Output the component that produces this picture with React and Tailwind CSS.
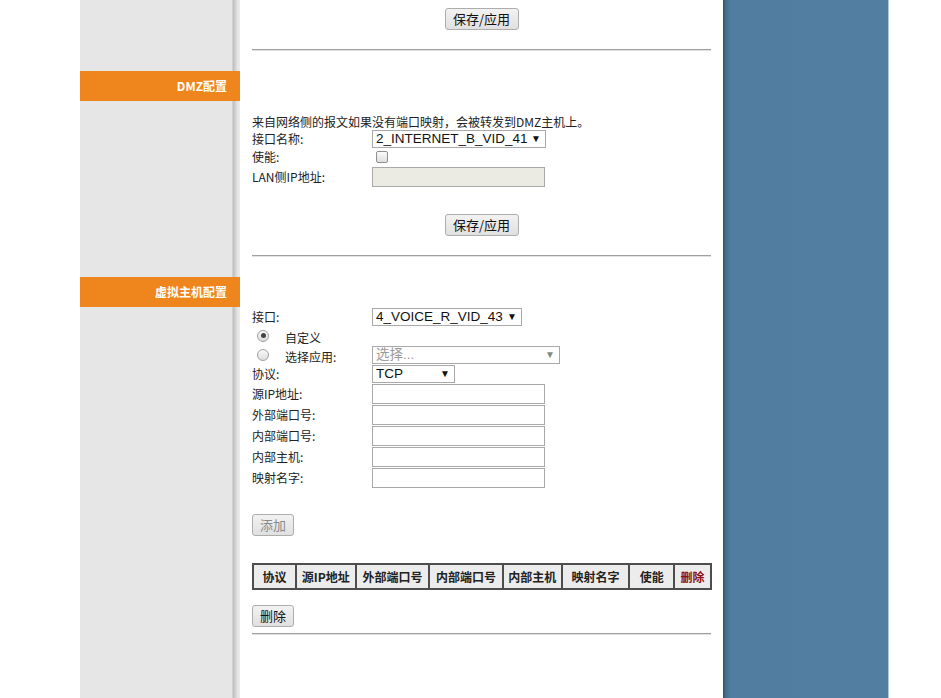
import React from "react";

const cjk = "font-['Noto_Sans_CJK_SC',sans-serif]";
const arial = "font-['Liberation_Sans','Noto_Sans_CJK_SC',sans-serif]";

function Btn({ children, w, disabled }) {
  return (
    <div
      className={`h-[22px] flex items-center justify-center border border-[#adadad] rounded-[3px] bg-[linear-gradient(#f2f2f2,#e0e0e0)] text-[13px] ${cjk} ${disabled ? "text-[#8a8a8a]" : "text-[#111]"}`}
      style={{ width: w }}
    >
      {children}
    </div>
  );
}

function Hr() {
  return <div className="h-[2px] border-t border-[#a0a0a0] border-b border-b-[#e2e2e2]" />;
}

function Select({ text, w, disabled, h = 18 }) {
  return (
    <div
      className={`flex items-center justify-between border border-[#a9a9a9] bg-white pl-[3px] pr-[4px] text-[13.5px] ${arial} ${disabled ? "text-[#9a9a9a]" : "text-[#111]"}`}
      style={{ width: w, height: h }}
    >
      <span className="leading-none">{text}</span>
      <span className={`text-[10px] leading-none ${disabled ? "text-[#888]" : "text-[#111]"}`}>▼</span>
    </div>
  );
}

function Label({ children }) {
  return <div className={`w-[120px] shrink-0 text-[12px] text-[#222] ${cjk}`}>{children}</div>;
}

function Radio({ checked }) {
  return (
    <div className="w-[12px] h-[12px] rounded-full border border-[#a0a0a0] bg-[linear-gradient(#fafafa,#dcdcdc)] flex items-center justify-center">
      {checked && <div className="w-[5px] h-[5px] rounded-full bg-[#444]" />}
    </div>
  );
}

function TextInput({ h = 20, disabled }) {
  return (
    <div
      className={`w-[173px] border border-[#a9a9a9] ${disabled ? "bg-[#ebebe4]" : "bg-white"}`}
      style={{ height: h }}
    />
  );
}

const cols = [
  ["协议", 43],
  ["源IP地址", 60],
  ["外部端口号", 74],
  ["内部端口号", 74],
  ["内部主机", 59],
  ["映射名字", 68],
  ["使能", 45],
  ["删除", 37],
];

export default function App() {
  return (
    <div className="flex h-[698px] w-[941px] overflow-hidden bg-white">
      <div className="w-[80px] shrink-0 bg-white" />
      <div className="w-[160px] shrink-0 flex flex-col bg-[linear-gradient(to_right,#e6e6e6_152px,#bdbdbd_153px,#cdcdcd_155px,#e2e2e2_157px,#ececec_160px)]">
        <div className="h-[71px]" />
        <div className={`h-[30px] bg-[#ef861d] flex items-center justify-end pr-[13px] text-white font-bold text-[12px] ${cjk}`}>
          DMZ配置
        </div>
        <div className="h-[176px]" />
        <div className={`h-[30px] bg-[#ef861d] flex items-center justify-end pr-[13px] text-white font-bold text-[12px] ${cjk}`}>
          虚拟主机配置
        </div>
      </div>
      <div className="w-[483px] shrink-0 px-[12px] flex flex-col">
        <div className="h-[8px]" />
        <div className="flex justify-center">
          <Btn w={74}>保存/应用</Btn>
        </div>
        <div className="h-[19px]" />
        <Hr />
        <div className="h-[63px]" />
        <div className={`h-[15px] flex items-center text-[12px] text-[#222] ${cjk}`}>
          来自网络侧的报文如果没有端口映射，会被转发到DMZ主机上。
        </div>
        <div className="h-[19px] flex items-center">
          <Label>接口名称:</Label>
          <Select text="2_INTERNET_B_VID_41" w={174} />
        </div>
        <div className="h-[18px] flex items-center">
          <Label>使能:</Label>
          <div className="ml-[4px] w-[12px] h-[12px] rounded-[2px] border border-[#8f8f8f] bg-[linear-gradient(#fbfbfb,#dedede)]" />
        </div>
        <div className="h-[22px] flex items-center">
          <Label>LAN侧IP地址:</Label>
          <TextInput disabled />
        </div>
        <div className="h-[26px]" />
        <div className="flex justify-center">
          <Btn w={74}>保存/应用</Btn>
        </div>
        <div className="h-[19px]" />
        <Hr />
        <div className="h-[50px]" />
        <div className="h-[19px] flex items-center">
          <Label>接口:</Label>
          <Select text="4_VOICE_R_VID_43" w={150} />
        </div>
        <div className="h-[19px] flex items-center">
          <div className="w-[33px] shrink-0 pl-[5px]"><Radio checked /></div>
          <div className={`pt-[5px] text-[12px] text-[#222] ${cjk}`}>自定义</div>
        </div>
        <div className="h-[19px] flex items-center">
          <div className="w-[33px] shrink-0 pl-[5px]"><Radio /></div>
          <div className={`w-[87px] pt-[5px] text-[12px] text-[#222] ${cjk}`}>选择应用:</div>
          <div className="pt-[1px]"><Select text="选择..." w={188} disabled /></div>
        </div>
        <div className="h-[19px] flex items-center">
          <Label>协议:</Label>
          <Select text="TCP" w={83} />
        </div>
        {["源IP地址:", "外部端口号:", "内部端口号:", "内部主机:", "映射名字:"].map((l) => (
          <div key={l} className="h-[21px] flex items-center">
            <Label>{l}</Label>
            <TextInput />
          </div>
        ))}
        <div className="h-[26px]" />
        <div><Btn w={42} disabled>添加</Btn></div>
        <div className="h-[27px]" />
        <div className="flex w-[460px] h-[27px] border-2 border-[#4d4d4d] bg-[#ececec]">
          {cols.map(([t, w], i) => (
            <div
              key={t}
              className={`flex items-center justify-center font-bold text-[12px] ${cjk} ${i > 0 ? "border-l-2 border-[#4d4d4d]" : ""} ${t === "删除" ? "text-[#8b1010]" : "text-[#222]"}`}
              style={{ width: i === 0 ? w - 2 : w }}
            >
              {t}
            </div>
          ))}
        </div>
        <div className="h-[15px]" />
        <div><Btn w={42}>删除</Btn></div>
        <div className="h-[6px]" />
        <Hr />
      </div>
      <div className="w-[165px] shrink-0 bg-[linear-gradient(to_right,#33556f,#46708f_3px,#517ea0_8px,#527fa1)]" />
      <div className="w-[1px] shrink-0 bg-[#b3c8d9]" />
      <div className="flex-1 bg-white" />
    </div>
  );
}
